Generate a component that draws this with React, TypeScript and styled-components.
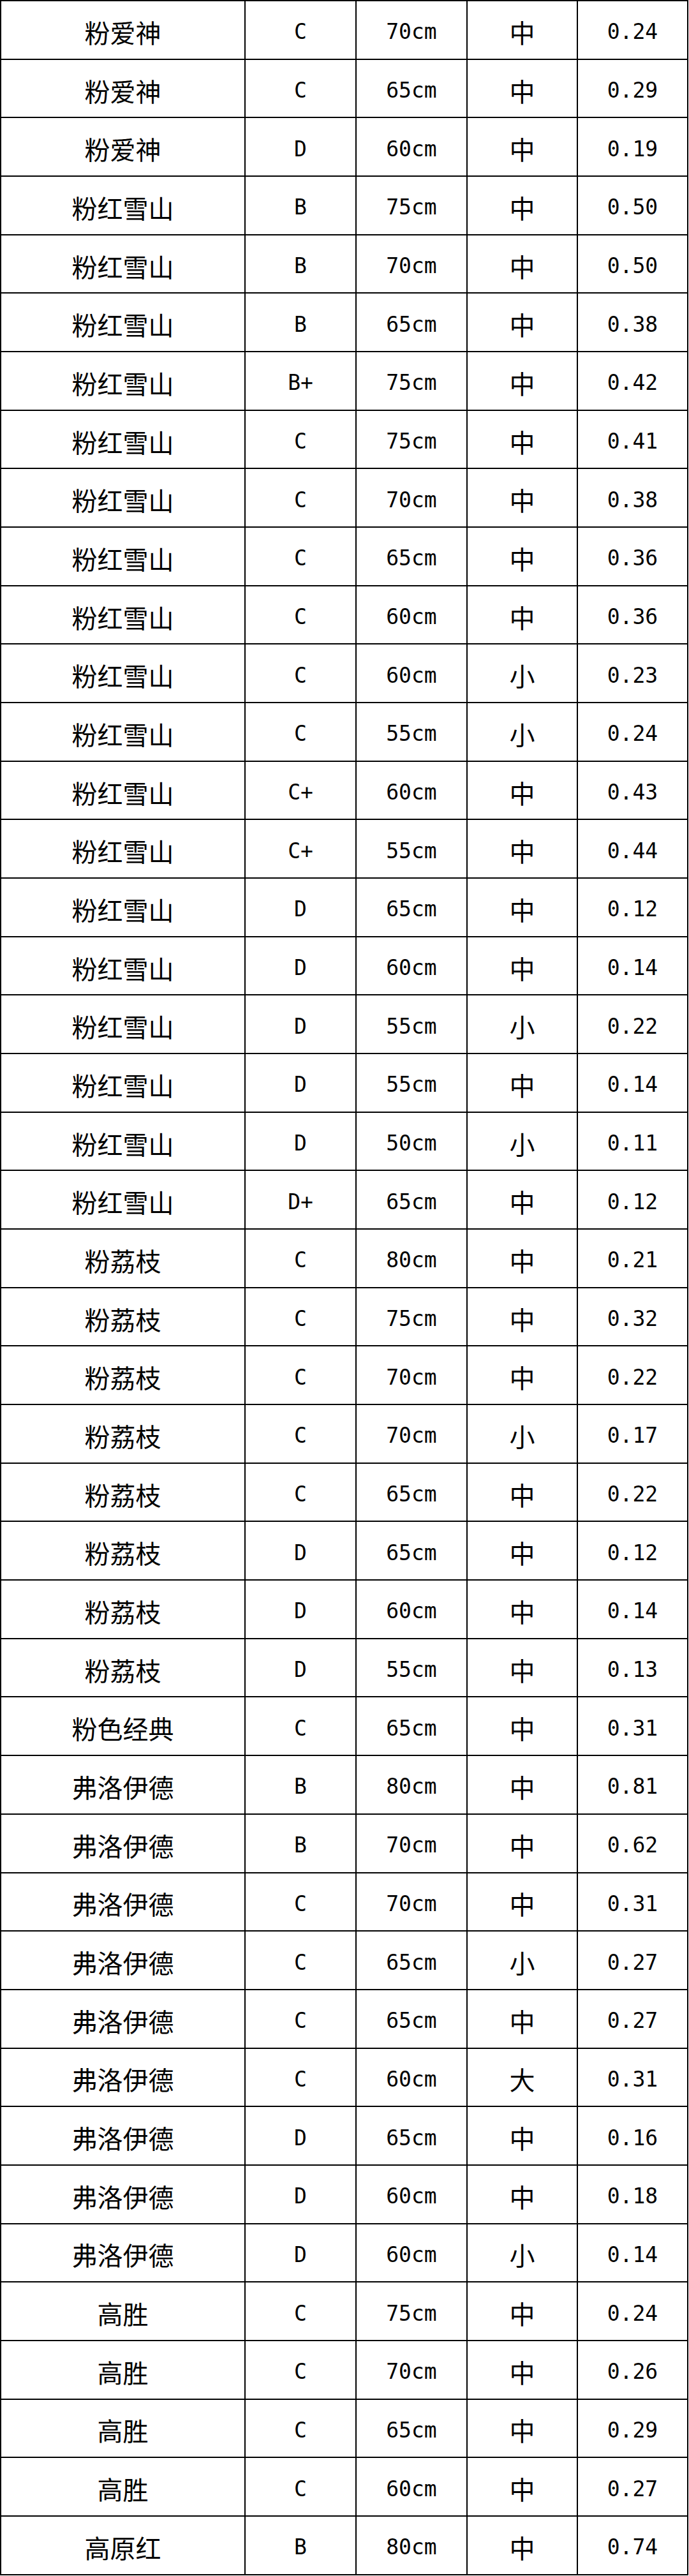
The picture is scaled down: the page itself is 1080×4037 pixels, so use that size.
import styled, { createGlobalStyle } from 'styled-components'

const GlobalStyle = createGlobalStyle`
  html, body {
    margin: 0;
    padding: 0;
    background: #ffffff;
  }
`

const StyledTable = styled.table`
  width: 1079px;
  height: 4036px;
  border-collapse: collapse;
  table-layout: fixed;
  color: #000000;
`

const StyledCell = styled.td<{ $cjk?: boolean }>`
  border: 2px solid #000000;
  padding: 6px 0 0 0;
  text-align: center;
  vertical-align: middle;
  white-space: pre;
  font-family: ${(p) =>
    p.$cjk ? '"Noto Sans CJK SC", sans-serif' : '"DejaVu Sans Mono", "Noto Sans CJK SC", monospace'};
  font-size: ${(p) => (p.$cjk ? '40px' : '33px')};
  line-height: 1;
`

const rows: [string, string, string, string, string][] = [
  ['粉爱神', 'C', '70cm', '中', '0.24'],
  ['粉爱神', 'C', '65cm', '中', '0.29'],
  ['粉爱神', 'D', '60cm', '中', '0.19'],
  ['粉红雪山', 'B', '75cm', '中', '0.50'],
  ['粉红雪山', 'B', '70cm', '中', '0.50'],
  ['粉红雪山', 'B', '65cm', '中', '0.38'],
  ['粉红雪山', 'B+', '75cm', '中', '0.42'],
  ['粉红雪山', 'C', '75cm', '中', '0.41'],
  ['粉红雪山', 'C', '70cm', '中', '0.38'],
  ['粉红雪山', 'C', '65cm', '中', '0.36'],
  ['粉红雪山', 'C', '60cm', '中', '0.36'],
  ['粉红雪山', 'C', '60cm', '小', '0.23'],
  ['粉红雪山', 'C', '55cm', '小', '0.24'],
  ['粉红雪山', 'C+', '60cm', '中', '0.43'],
  ['粉红雪山', 'C+', '55cm', '中', '0.44'],
  ['粉红雪山', 'D', '65cm', '中', '0.12'],
  ['粉红雪山', 'D', '60cm', '中', '0.14'],
  ['粉红雪山', 'D', '55cm', '小', '0.22'],
  ['粉红雪山', 'D', '55cm', '中', '0.14'],
  ['粉红雪山', 'D', '50cm', '小', '0.11'],
  ['粉红雪山', 'D+', '65cm', '中', '0.12'],
  ['粉荔枝', 'C', '80cm', '中', '0.21'],
  ['粉荔枝', 'C', '75cm', '中', '0.32'],
  ['粉荔枝', 'C', '70cm', '中', '0.22'],
  ['粉荔枝', 'C', '70cm', '小', '0.17'],
  ['粉荔枝', 'C', '65cm', '中', '0.22'],
  ['粉荔枝', 'D', '65cm', '中', '0.12'],
  ['粉荔枝', 'D', '60cm', '中', '0.14'],
  ['粉荔枝', 'D', '55cm', '中', '0.13'],
  ['粉色经典', 'C', '65cm', '中', '0.31'],
  ['弗洛伊德', 'B', '80cm', '中', '0.81'],
  ['弗洛伊德', 'B', '70cm', '中', '0.62'],
  ['弗洛伊德', 'C', '70cm', '中', '0.31'],
  ['弗洛伊德', 'C', '65cm', '小', '0.27'],
  ['弗洛伊德', 'C', '65cm', '中', '0.27'],
  ['弗洛伊德', 'C', '60cm', '大', '0.31'],
  ['弗洛伊德', 'D', '65cm', '中', '0.16'],
  ['弗洛伊德', 'D', '60cm', '中', '0.18'],
  ['弗洛伊德', 'D', '60cm', '小', '0.14'],
  ['高胜', 'C', '75cm', '中', '0.24'],
  ['高胜', 'C', '70cm', '中', '0.26'],
  ['高胜', 'C', '65cm', '中', '0.29'],
  ['高胜', 'C', '60cm', '中', '0.27'],
  ['高原红', 'B', '80cm', '中', '0.74'],
]

const columnWidths = [383, 174, 174, 173, 173]

const App = () => {
  return (
    <>
      <GlobalStyle />
      <StyledTable>
        <colgroup>
          {columnWidths.map((w, i) => (
            <col key={i} style={{ width: w }} />
          ))}
        </colgroup>
        <tbody>
          {rows.map((r, i) => (
            <tr key={i}>
              <StyledCell $cjk>{r[0]}</StyledCell>
              <StyledCell>{r[1]}</StyledCell>
              <StyledCell>{r[2]}</StyledCell>
              <StyledCell $cjk>{r[3]}</StyledCell>
              <StyledCell>{r[4]}</StyledCell>
            </tr>
          ))}
        </tbody>
      </StyledTable>
    </>
  )
}

export default App
